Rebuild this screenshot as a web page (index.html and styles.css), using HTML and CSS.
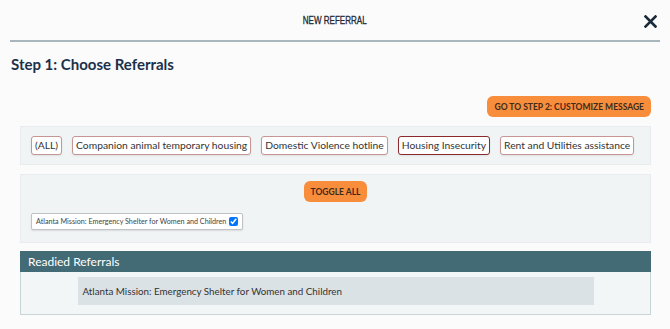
FILE: index.html
```html
<!DOCTYPE html>
<html>
<head>
    <meta charset="UTF-8">
    <title>New Referral</title>
    <link rel="stylesheet" href="styles.css">
</head>
<body>
    <div class="modal">
        <!-- 모달 헤더 -->
        <div class="modal-header">
            <span></span>
            <div class="modal-title">NEW REFERRAL</div>
            <button class="close-btn" aria-label="close">
                <svg width="13" height="13" viewBox="0 0 13 13">
                    <path d="M1.5 1.5 L11.5 11.5 M11.5 1.5 L1.5 11.5" stroke="#1b2a3b" stroke-width="2.6" stroke-linecap="square"/>
                </svg>
            </button>
        </div>
        <div class="divider"></div>

        <h2 class="step-title">Step 1: Choose Referrals</h2>

        <div class="modal-body">
            <div class="actions">
                <button class="orange-btn">GO TO STEP 2: CUSTOMIZE MESSAGE</button>
            </div>

            <!-- 카테고리 필터 -->
            <div class="panel filters">
                <span class="chip">(ALL)</span>
                <span class="chip">Companion animal temporary housing</span>
                <span class="chip">Domestic Violence hotline</span>
                <span class="chip selected">Housing Insecurity</span>
                <span class="chip">Rent and Utilities assistance</span>
            </div>

            <!-- 기관 목록 -->
            <div class="panel agencies">
                <div class="toggle-row">
                    <button class="orange-btn">TOGGLE ALL</button>
                </div>
                <label class="agency">
                    Atlanta Mission: Emergency Shelter for Women and Children
                    <input type="checkbox" checked>
                </label>
            </div>

            <!-- 준비된 추천 -->
            <div class="readied">
                <div class="readied-header">Readied Referrals</div>
                <div class="readied-body">
                    <div class="readied-item">Atlanta Mission: Emergency Shelter for Women and Children</div>
                </div>
            </div>
        </div>
    </div>
</body>
</html>
```

FILE: styles.css
```css
/* 전체 페이지 */
body {
    margin: 0;
    background-color: #fbfbfb;
    font-family: Lato, 'Open Sans', sans-serif;
    color: #333;
}

/* 헤더 */
.modal-header {
    display: grid;
    grid-template-columns: 1fr auto 1fr;
    align-items: center;
    height: 40px;
}

.modal-title {
    font-family: 'Liberation Sans', sans-serif;
    font-size: 11.5px;
    color: #1f2a36;
    transform: scaleX(0.7);
    -webkit-text-stroke: 0.35px #1f2a36;
}

.close-btn {
    justify-self: end;
    margin-right: 13px;
    margin-top: 2px;
    padding: 0;
    border: none;
    background: none;
    display: flex;
}

.divider {
    margin: 0 10px;
    border-top: 2px solid #a9b6be;
}

/* 단계 제목 */
.step-title {
    margin: 11px 0 0 11px;
    font-size: 15px;
    font-weight: 700;
    color: #1b3049;
    line-height: 22px;
}

.modal-body {
    padding: 0 19px 0 20px;
}

.actions {
    display: flex;
    justify-content: flex-end;
    margin-top: 21px;
}

/* 주황색 버튼 */
.orange-btn {
    font-family: Lato, 'Open Sans', sans-serif;
    font-size: 8.5px;
    font-weight: 700;
    color: #3f2a1c;
    background-color: #f88d3c;
    border: none;
    border-radius: 6px;
    height: 21px;
    padding: 0 7px;
}

/* 패널 공통 */
.panel {
    background-color: #f1f4f5;
    border: 1px solid #e8ecee;
}

.filters {
    display: flex;
    align-items: center;
    gap: 10px;
    height: 37px;
    margin-top: 9px;
    padding-left: 10px;
}

.chip {
    white-space: nowrap;
    background-color: #fff;
    border: 1px solid #c79594;
    border-radius: 3px;
    padding: 0 3px;
    height: 17px;
    line-height: 17px;
    font-size: 10.3px;
    color: #333;
    box-shadow: 0 1px 2px rgba(0, 0, 0, 0.08);
}

.chip.selected {
    border: 1.5px solid #8b2a2d;
}

.agencies {
    margin-top: 9px;
    padding: 6px 10px 12px;
}

.toggle-row {
    display: flex;
    justify-content: center;
}

.agency {
    display: inline-flex;
    align-items: center;
    gap: 3px;
    margin-top: 11px;
    height: 15px;
    padding: 0 4px;
    background-color: #fff;
    border: 1px solid #bfc3c6;
    border-radius: 2px;
    font-size: 7.2px;
    color: #444;
    box-shadow: 0 1px 2px rgba(0, 0, 0, 0.1);
}

.agency input {
    margin: 0;
    width: 9px;
    height: 9px;
}

/* 준비된 추천 영역 */
.readied {
    margin-top: 8px;
}

.readied-header {
    background-color: #426b76;
    color: #fff;
    font-size: 12px;
    height: 21px;
    line-height: 21px;
    padding-left: 8px;
}

.readied-body {
    background-color: #f3f6f7;
    border: 1px solid #c9d4d7;
    border-top: none;
    padding: 5px 0 9px;
}

.readied-item {
    width: 511px;
    margin: 0 auto;
    padding-left: 5px;
    height: 28px;
    line-height: 28px;
    background-color: #dbe2e5;
    font-size: 9.8px;
    color: #333;
}
```
